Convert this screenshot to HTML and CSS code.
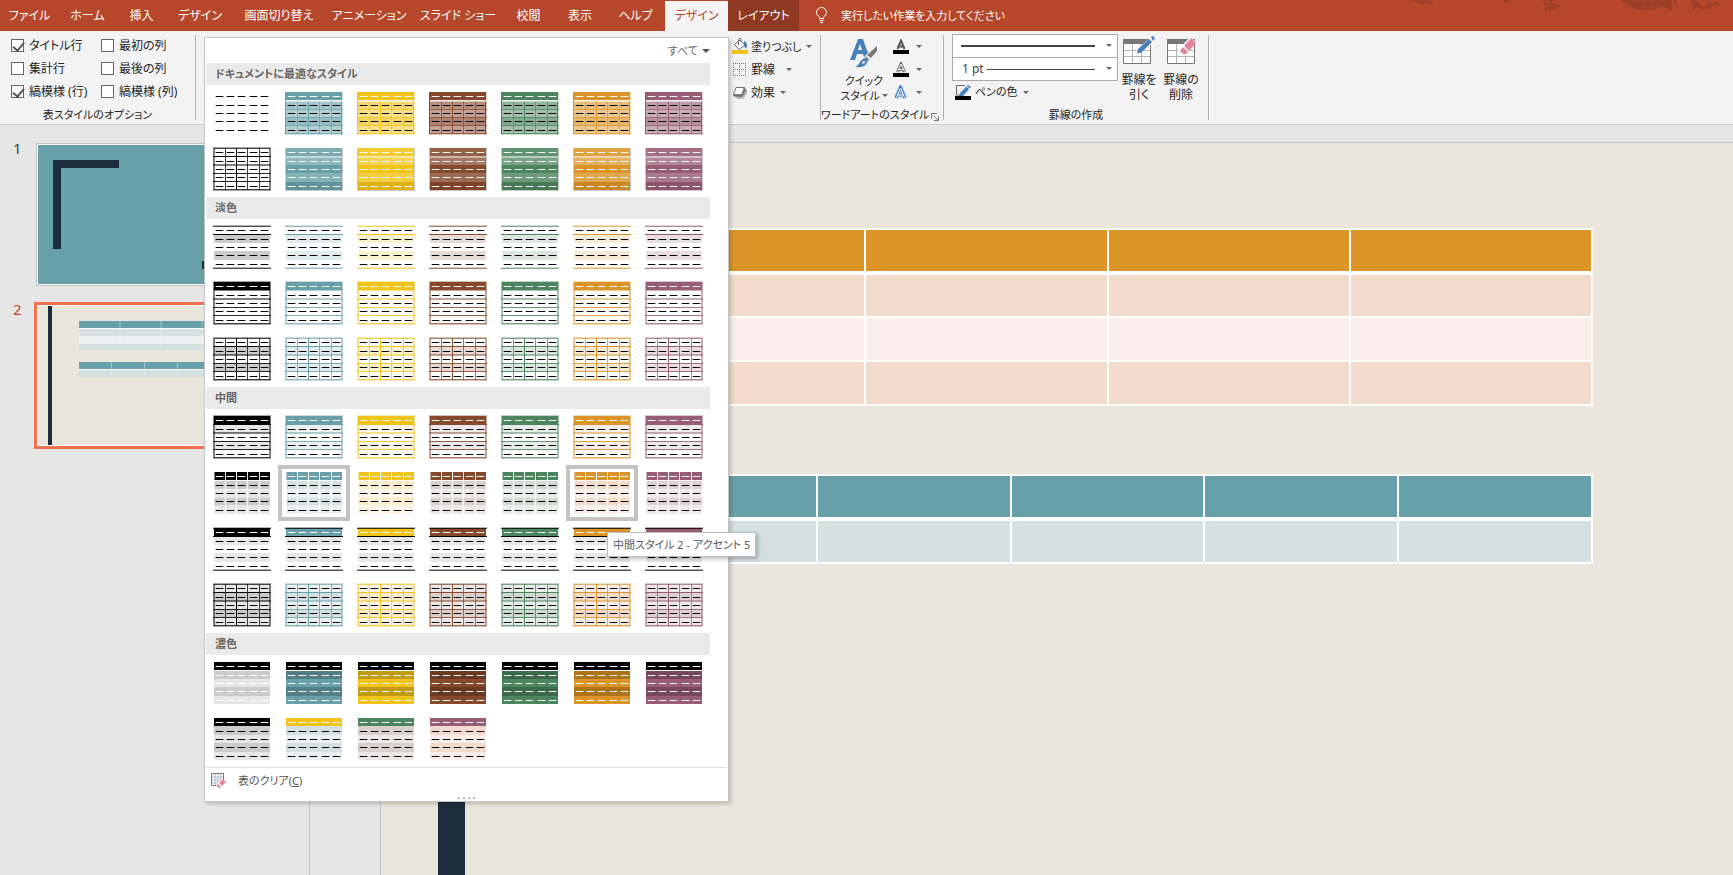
FILE: index.html
```html
<!DOCTYPE html>
<html lang="ja">
<head>
<meta charset="utf-8">
<title>表のデザイン</title>
<link rel="stylesheet" href="styles.css">
</head>
<body>
<header class="tabbar">
  <nav class="tabs">
    <button class="tab">ファイル</button>
    <button class="tab">ホーム</button>
    <button class="tab">挿入</button>
    <button class="tab">デザイン</button>
    <button class="tab">画面切り替え</button>
    <button class="tab">アニメーション</button>
    <button class="tab">スライド ショー</button>
    <button class="tab">校閲</button>
    <button class="tab">表示</button>
    <button class="tab">ヘルプ</button>
    <button class="tab tab-active">デザイン</button>
    <button class="tab tab-context">レイアウト</button>
  </nav>
  <button class="tellme">
    <svg width="13" height="17" viewBox="0 0 13 17" fill="none" stroke="#fff"><path d="M4.5 11.5V10C2.500 8.500 1.500 7.300 1.500 5.500a5 5 0 0 1 10 0c0 1.800-1 3-3 4.500v1.500zM4.500 13.500h4M5 15.500h3"/></svg>
    <span>実行したい作業を入力してください</span>
  </button>
  <svg class="sea" width="330" height="14" viewBox="0 0 330 14" aria-hidden="true">
    <g fill="#9c4029"><path d="M10 0h16l2 2 4-1-3 2 2 3-4-3-6 1-9-2z"/><circle cx="103" cy="0" r="3"/><path d="M140 0h14l-1 4 4 2v2l-4-2 2 5-3-3-1 4-2-4-2 4-1-4-3 4-1-3 2-3-3-1z"/><path d="M219 0h41l5-3 4 4v9c-3 2-6-2-8-4-8 5-33 7-42-6z"/><path d="M289 0l6 3 1 3-4 1-2 4M296 6c5 5 9 1 9-1l4 4M304 3l6 1 4-2 2 3" stroke="#9c4029" stroke-width="2"/><path d="M271 0h2v5h-2z"/></g>
    <g fill="#b7472a"><circle cx="144" cy="2" r="2"/><circle cx="151" cy="2" r="2"/><path d="M228 0h4l-2 2zM238 0h4l-2 2zM248 0h4l-2 2z"/></g>
  </svg>
</header>

<section class="ribbon">
  <div class="group group-options">
    <div class="checks">
      <label><input type="checkbox" checked>タイトル行</label>
      <label><input type="checkbox">最初の列</label>
      <label><input type="checkbox">集計行</label>
      <label><input type="checkbox">最後の列</label>
      <label><input type="checkbox" checked>縞模様 (行)</label>
      <label><input type="checkbox">縞模様 (列)</label>
    </div>
    <h2 class="group-name">表スタイルのオプション</h2>
  </div>

  <div class="group group-styles">
    <div class="effects">
      <button class="small">
        <svg width="16" height="17" viewBox="0 0 16 17"><path d="M0 12h16v4H0z" fill="#f2c31a"/><path d="M12 3c3 1 4 4 2 8l-2-3z" fill="#4a80ba"/><path d="M2.500 6.500L8 2l5 5-6 4.500z" fill="#fff" stroke="#666"/><path d="M6.500 7V1.500c0-1.500 2.500-1.500 2.500 0V4" fill="none" stroke="#666"/></svg>
        <span>塗りつぶし</span><i class="arrow"></i>
      </button>
      <button class="small">
        <svg width="16" height="16" viewBox="0 0 16 16" fill="none" stroke="#777" stroke-dasharray="1 1"><path d="M1 1.500h13M1 7.500h13M1 13.500h13M1.500 1v13M7.500 1v13M13.500 1v13"/></svg>
        <span>罫線</span><i class="arrow arrow-far"></i>
      </button>
      <button class="small">
        <svg width="16" height="16" viewBox="0 0 16 16"><path d="M3 12L6 14h5l4-5V4z" fill="#bbb"/><path d="M4 2.500h8.500L10 9.500H1.500z" fill="#fff" stroke="#777"/><path d="M12.500 2.500l1 3-3.500 6-8-.5-.5-1.500H10z" fill="#777" stroke="#777"/></svg>
        <span>効果</span><i class="arrow"></i>
      </button>
    </div>

    <div class="menu">
      <div class="menu-top"><button class="filter">すべて<i class="arrow arrow-big"></i></button></div>
      <div class="gallery" id="gallery"></div>
      <button class="clear">
        <svg width="16" height="16" viewBox="0 0 16 16"><path d="M1 1h12v12H1z" fill="#fff"/><path d="M4 1v12M7 1v12M10 1v12M1 4h12M1 7h12M1 10h12" stroke="#b5bac4"/><path d="M.5.5h12v12H.5z" fill="none" stroke="#777"/><path d="M5 12l6-6 5 3-6 6.500H7z" fill="#fff"/><path d="M8 10l4-4 3 3-4 4z" fill="#e2849a"/><path d="M7 11l3 3-1.500 1.500-3-3z" fill="#e2849a"/></svg>
        <span>表のクリア(<u>C</u>)</span>
      </button>
      <div class="grip"><i></i><i></i><i></i><i></i></div>
      <div class="tooltip" role="tooltip">中間スタイル 2 - アクセント 5</div>
    </div>
  </div>

  <div class="group group-wordart">
    <div class="wordart">
      <button class="big">
        <svg width="30" height="32" viewBox="0 0 30 32"><path d="M1 23L9 2h5l5 14-4 4-1-3H8l-2 6zM9 13h4l-2-6z" fill="#4a80ba" fill-rule="evenodd"/><path d="M28 9v5l-6 7-4-3z" fill="#777"/><path d="M16.500 19l4 3-1 2-4-3z" fill="#999"/><path d="M14 22c3-2 6 1 4 4-2 4-8 5-12 4 4-1 4-6 8-8z" fill="#4a80ba"/><path d="M13 25c2-2 4-1 3 1l-3 1z" fill="#dbe8f4"/></svg>
        <span>クイック</span><span class="with-arrow">スタイル<i class="arrow"></i></span>
      </button>
      <div class="text-tools">
        <button class="small" aria-label="文字の塗りつぶし"><svg width="16" height="16" viewBox="0 0 16 16"><path d="M4.500 10L8 1.500 11.500 10M6 7.500h4" fill="none" stroke="#555" stroke-width="2"/><path d="M0 11h16v4H0z"/></svg><i class="arrow"></i></button>
        <button class="small" aria-label="文字の輪郭"><svg width="16" height="16" viewBox="0 0 16 16"><path d="M4.500 10L8 2 11.500 10M6 7.500h4" fill="none" stroke="#666" stroke-width="3"/><path d="M4.500 9.500L8 2 11.500 9.500M6 7.500h4" fill="none" stroke="#fff"/><path d="M0 11h16v4H0z"/></svg><i class="arrow"></i></button>
        <button class="small" aria-label="文字の効果"><svg width="16" height="16" viewBox="0 0 16 16" fill="none"><path d="M3 13L7.500 3 12 13M5 10h5" stroke="#bcd5ee" stroke-width="5"/><path d="M3 13L7.500 2.500 12 13M5 10h5" stroke="#4a80ba" stroke-width="3"/><path d="M3.500 12.500L7.500 3 11.500 12.500M5 10h5" stroke="#fff"/></svg><i class="arrow"></i></button>
      </div>
    </div>
    <h2 class="group-name">ワードアートのスタイル
      <button class="launcher" aria-label="詳細"><svg width="8" height="8" viewBox="0 0 8 8" fill="none" stroke="#777"><path d="M.5 6V.5H6M3 3l4 4M7.500 3v4.500H3"/></svg></button>
    </h2>
  </div>

  <div class="group group-borders">
    <div class="borders">
      <div class="pen">
        <select class="combo combo-style" aria-label="ペンのスタイル"><option></option></select>
        <select class="combo combo-width" aria-label="ペンの太さ"><option>1 pt</option></select>
        <button class="small pen-color">
          <svg width="17" height="17" viewBox="0 0 17 17"><path d="M10 1.500H1.500V11M1.500 11H5" fill="none" stroke="#666"/><path d="M13 1l3 2-8 9-4 1 1-4z" fill="#4a80ba"/><path d="M12 3l3 2" stroke="#fff"/><path d="M0 12h16v4H0z"/></svg>
          <span>ペンの色</span><i class="arrow"></i>
        </button>
      </div>
      <button class="big">
        <svg width="32" height="30" viewBox="0 0 32 30"><path d="M.5 3.500h27v24H.5z" fill="#fff" stroke="#777"/><path d="M0 3h28v5H0z" fill="#777"/><path d="M1 14.500h26M1 20.500h26M9.500 8v19M18.500 8v19" stroke="#b4b4b4"/><path d="M12 19l2-6L27 2l4 4-13 11z" fill="#f3f3f3"/><path d="M14 17l1-4L26 3l3 3-11 11z" fill="#4a80ba"/><path d="M28 1l2-1 2 2-2 3z" fill="#4a80ba"/></svg>
        <span>罫線を</span><span>引く</span>
      </button>
      <button class="big">
        <svg width="32" height="30" viewBox="0 0 32 30"><path d="M2.500 3.500h27v24H2.500z" fill="#fff" stroke="#777"/><path d="M2 3h28v5H2z" fill="#777"/><path d="M3 14.500h26M3 20.500h26M11.500 8v19M20.500 8v19" stroke="#b4b4b4"/><path d="M13 14L25 1l6 5-11 14z" fill="#fff"/><path d="M19 10l7-8 5 5-7 8z" fill="#e2849a"/><path d="M18 11l5 5-2 2h-3l-3-3z" fill="#e2849a"/></svg>
        <span>罫線の</span><span>削除</span>
      </button>
    </div>
    <h2 class="group-name">罫線の作成</h2>
  </div>
</section>

<main class="workspace">
  <aside class="slides">
    <div class="slide-item">
      <span class="num">1</span>
      <button class="thumb" aria-label="スライド 1">
        <svg viewBox="0 0 247 139"><path d="M0 0h247v139H0z" fill="#68a0a9"/><path d="M15 15h66v8H23v81h-8zM164 116h66v-66h8v74h-74z" fill="#1b2d3e"/></svg>
      </button>
    </div>
    <div class="slide-item">
      <span class="num num-current">2</span>
      <button class="thumb thumb-current" aria-label="スライド 2">
        <svg viewBox="0 0 247 139"><path d="M0 0h247v139H0z" fill="#ebe6dc"/><path d="M10 0h4v139h-4z" fill="#1b2d3e"/><path d="M41 15h165v7H41zM41 56h165v7H41z" fill="#68a0a9"/><path d="M41 23h165v7H41zM41 38h165v6H41zM41 64h165v7H41z" fill="#d4e0e2"/><path d="M41 30h165v8H41z" fill="#ebf0f1"/><path d="M41 22.500h165M41 63.500h165" stroke="#fff"/><path d="M82 15v29M123 15v29M164 15v29M73.500 56v15M106.500 56v15M139.500 56v15M172.500 56v15" stroke="#fff" stroke-opacity=".4"/></svg>
      </button>
    </div>
  </aside>
  <section class="editor">
    <div class="slide">
      <div class="slide-bar"></div>
      <table class="grid grid-orange">
        <thead><tr><th></th><th></th><th></th><th></th></tr></thead>
        <tbody>
          <tr><td></td><td></td><td></td><td></td></tr>
          <tr><td></td><td></td><td></td><td></td></tr>
          <tr><td></td><td></td><td></td><td></td></tr>
        </tbody>
      </table>
      <table class="grid grid-teal">
        <thead><tr><th></th><th></th><th></th><th></th><th></th></tr></thead>
        <tbody><tr><td></td><td></td><td></td><td></td><td></td></tr></tbody>
      </table>
    </div>
  </section>
</main>
<script src="gallery.js"></script>
</body>
</html>
```

FILE: styles.css
```css
* { box-sizing: border-box; }

body {
  margin: 0;
  height: 100vh;
  display: flex;
  flex-direction: column;
  overflow: hidden;
  background: #e6e6e6;
  color: #262626;
  font: 12px/16px "Noto Sans", "Noto Sans CJK JP", sans-serif;
  font-feature-settings: "palt";
}

button, select, input { font: inherit; font-feature-settings: inherit; color: inherit; margin: 0; }
button { border: 0; padding: 0; background: none; white-space: nowrap; }
svg { display: block; flex: none; }

/* Tabs */
.tabbar { position: relative; display: flex; height: 31px; background: #b7472a; color: #fff; }
.tabs { display: grid; grid-template-columns: 59px 57px 51px 66px 92px 88px 90px 51px 52px 59px 63px 71px; }
.tab { text-align: center; }
.tab-active { background: #f3f3f3; color: #b7472a; border-top: 1px solid #b7472a; }
.tab-context { background: #8f3822; }
.tellme { display: flex; align-items: center; gap: 13px; padding-left: 16px; font-size: 11px; }
.sea { position: absolute; top: 0; right: 0; }

/* Ribbon */
.ribbon { display: flex; height: 94px; background: #f3f3f3; border-bottom: 1px solid #d0d0d0; padding: 4px 0; }
.group { display: flex; flex-direction: column; border-right: 1px solid #b1b1b1; position: relative; }
.group-name { margin: auto 0 -3px; font-size: 11px; font-weight: normal; line-height: 16px; text-align: center; white-space: nowrap; }
.group-options { width: 196px; }
.checks { display: grid; grid-template-columns: 90px 84px; grid-auto-rows: 23px; padding-left: 11px; margin-top: -1px; }
.checks label { display: flex; align-items: center; gap: 5px; white-space: nowrap; }
.checks input { appearance: none; position: relative; width: 13px; height: 13px; flex: none; border: 1px solid #666; background: #fff; }
.checks input:checked::after { content: ""; position: absolute; left: 3px; top: 0; width: 5px; height: 9px; border: solid #555; border-width: 0 2px 2px 0; transform: rotate(40deg); }

.group-styles { width: 625px; }
.effects { align-self: flex-end; width: 88px; display: grid; grid-auto-rows: 23px; }
.small { display: flex; align-items: center; gap: 3px; }
.effects .small:first-child { font-size: 11px; }
.arrow { width: 0; height: 0; flex: none; border: solid transparent; border-width: 3px 3px 0; border-top-color: #666; margin-left: 2px; }
.arrow-far { margin-left: 8px; }
.arrow-big { border-width: 4px 4px 0; border-top-color: #555; margin-left: 4px; }

.group-wordart { width: 123px; }
.wordart { display: flex; gap: 6px; padding-left: 20px; }
.big { display: flex; flex-direction: column; align-items: center; width: 42px; line-height: 15px; }
.wordart .big { width: 46px; padding-top: 2px; font-size: 11px; }
.wordart .big svg { margin-bottom: 4px; }
.with-arrow { display: flex; align-items: center; }
.text-tools { display: grid; grid-auto-rows: 23px; }
.text-tools .arrow { margin-left: 4px; }
.launcher { position: absolute; right: 4px; bottom: -1px; }
.group-wordart .group-name { padding-right: 16px; }

.group-borders { width: 265px; }
.borders { display: flex; padding-left: 8px; }
.pen { position: relative; width: 166px; margin-top: -1px; }
.combo { appearance: none; display: block; width: 100%; height: 24px; border: 1px solid #ababab; border-radius: 0; padding: 0 9px; color: #444; }
.combo-style { background: linear-gradient(#444, #444) 8px 10px / 134px 2px no-repeat, #fff; }
.combo-width { margin-top: -1px; background: linear-gradient(#444, #444) 34px 11px / 108px 1px no-repeat, #fff; }
.pen::before, .pen::after { content: ""; position: absolute; right: 6px; top: 10px; border: solid transparent; border-width: 3px 3px 0; border-top-color: #666; pointer-events: none; }
.pen::after { top: 33px; }
.pen-color { height: 22px; padding-left: 3px; font-size: 11px; }
.borders .big { padding-top: 1px; }
.borders .big svg { margin-bottom: 6px; }

/* Style gallery menu */
.menu { position: absolute; z-index: 2; left: 8px; top: 2px; width: 525px; background: #fff; border: 1px solid #c6c6c6; box-shadow: 2px 2px 4px rgba(0, 0, 0, .2); padding: 0 1px; color: #444; }
.menu-top { height: 25px; display: flex; justify-content: flex-end; padding-right: 17px; }
.filter { display: flex; align-items: center; color: #666; font-size: 11px; }
.gallery { padding-right: 17px; }
.gallery h3 { margin: 0; height: 22px; padding-left: 9px; background: #eaeaea; color: #666; font-size: 11px; line-height: 22px; }
.styles { display: grid; grid-template-columns: repeat(7, 72px); grid-auto-rows: 56px; }
.style { display: flex; align-items: center; justify-content: center; }
.style-selected { border: 4px solid #c3c3c3; }
.clear { display: flex; align-items: center; gap: 11px; width: 100%; height: 27px; border-top: 1px solid #e1e1e1; padding-left: 5px; color: #555; font-size: 11px; }
.grip { display: flex; justify-content: center; align-items: center; gap: 3px; height: 7px; }
.grip i { width: 2px; height: 2px; background: #b0b4be; }
.tooltip { position: absolute; left: 402px; top: 494px; padding: 3px 5px; line-height: 17px; font-size: 11px; white-space: nowrap; background: #fff; border: 1px solid #bebebe; box-shadow: 2px 2px 4px rgba(0, 0, 0, .25); color: #575757; }

/* Slide list and editor */
.workspace { flex: 1; min-height: 0; display: flex; }
.slides { width: 310px; flex: none; border-right: 1px solid #c0c0c0; padding-top: 18px; }
.slide-item { display: flex; align-items: flex-start; height: 161px; }
.num { width: 36px; padding-left: 13px; font-size: 15px; color: #444; line-height: 10px; }
.num-current { color: #c8452a; }
.thumb { width: 251px; border: 1px solid #c3c3c3; padding: 1px; background: #fff; }
.thumb-current { outline: 3px solid #f27250; outline-offset: -1px; border-color: #fff; }
.editor { flex: 1; min-width: 0; margin-left: 70px; padding-top: 17px; display: flex; }
.slide { position: relative; flex: 1; min-width: 0; border: solid #c3c3c3; border-width: 1px 0 0 1px; background: #ebe6dc; padding: 85px 140px 0 241px; }
.slide-bar { position: absolute; left: 57px; top: 0; bottom: 0; width: 27px; background: #1b2d3e; }
.grid { width: 100%; border-collapse: collapse; table-layout: fixed; }
.grid th, .grid td { border: 2px solid #fff; height: 44px; padding: 0; }
.grid th { border-bottom-width: 4px; }
.grid-orange th { background: #db9428; }
.grid-orange td { background: #f2dbcb; }
.grid-orange tr:nth-child(even) td { background: #f9eee9; }
.grid-teal { margin-top: 68px; }
.grid-teal th { background: #68a0a9; }
.grid-teal td { background: #d4e0e2; }
```

FILE: gallery.js
```js
// Accent palette: base colour, darker shade, strong tint, weak tint
const palette = [
  { base: "#000000", dark: "#cbcbcb", a: "#cbcbcb", b: "#e7e7e7" },
  { base: "#68a0a9", dark: "#537f87", a: "#d4e0e2", b: "#ebf0f1" },
  { base: "#f2c31a", dark: "#c29b12", a: "#faebcb", b: "#fdf5e7" },
  { base: "#87492b", dark: "#6b3820", a: "#d9cfcb", b: "#ede8e7" },
  { base: "#4b855d", dark: "#3b6a49", a: "#d0dad2", b: "#e9edea" },
  { base: "#db9428", dark: "#af7319", a: "#f2dbcb", b: "#f9eee9" },
  { base: "#985c75", dark: "#79475b", a: "#ddd1d5", b: "#efe9eb" }
];
const ys = [0, 9, 17, 25, 34, 42];

const rect = (x, y, w, h, fill, o = 1) =>
  `<rect x="${x}" y="${y}" width="${w}" height="${h}" fill="${fill}" fill-opacity="${o}"/>`;
const band = (i, fill, o) => rect(0, ys[i], 56, ys[i + 1] - ys[i], fill, o);
const bands = (a, b, o) => band(1, a, o) + band(2, b, o) + band(3, a, o) + band(4, b, o);
const hline = (y, c, o = 1) => rect(-1, y, 58, 1, c, o);
const softLine = (y, c) => hline(y, c, .5) + hline(y - 1, c, .5);
const vlines = (c, from, o = .75) => [11, 22, 33, 45].map(x => rect(x, from, 1, 42 - from, c, x === 22 ? 1 : o)).join("");
const frame = c => rect(-1, -1, 58, 1, c, .35) + rect(0, 0, 56, 1, c, .7) +
  rect(-1, 42, 58, 1, c, .35) + rect(0, 41, 56, 1, c, .75) +
  rect(-1, 0, 1, 42, c, .5) + rect(0, 0, 1, 42, c, .5) + rect(55, 0, 1, 42, c, .5) + rect(56, 0, 1, 42, c, .5);
const innerLines = c => softLine(17, c) + hline(25, c, .85) + hline(33, c, .85);
const dashes = (head, body) => [4, 13, 21, 29, 38].map((y, i) =>
  [2, 13, 24, 36, 47].map(x => rect(x - 1, y, 9, 1, i ? body : head, .3) + rect(x, y, 7, 1, i ? body : head)).join("")).join("");
const header = c => rect(0, 0, 56, 8, c);

const draw = {
  plain: () => dashes("#000", "#000"),
  themed: p => rect(-1, 0, 58, 43, p.base, .3) + header(p.base) + bands(p.base, p.base, .3) +
    band(1, p.base, .2) + band(3, p.base, .35) + vlines(p.base, 9, .7) +
    [17, 25, 33].map(y => hline(y, p.base, .7)).join("") + rect(-1, 0, 1, 42, p.base) + rect(55, 9, 1, 33, p.base) +
    hline(41, p.base, .7) + rect(0, 8, 56, 2, "#fff", .55) + dashes("#fff", "#000"),
  gridOnly: p => frame(p.base) + hline(8, p.base) + innerLines(p.base) + vlines(p.base, 0) + dashes("#000", "#000"),
  glossy: p => rect(-1, 0, 58, 43, "#888", .45) + rect(0, 0, 56, 42, p.base) + rect(0, 0, 56, 8, "#fff", .12) +
    rect(0, 8, 56, 2, "#fff", .6) + rect(0, 10, 56, 7, "#fff", .25) + rect(0, 25, 56, 9, "#fff", .18) +
    rect(0, 34, 56, 8, "#000", .08) + dashes("#fff", "#fff"),
  lightLines: p => band(1, p.base, .2) + band(3, p.base, .2) + hline(8, p.base) +
    hline(-1, p.base, .3) + hline(0, p.base, .7) + hline(42, p.base, .7) + hline(41, p.base, .3) + dashes("#000", "#000"),
  lightFrame: p => frame(p.base) + header(p.base) + rect(0, 8, 56, 1, p.base, .5) + innerLines(p.base) + dashes("#fff", "#000"),
  lightGrid: p => band(1, p.base, .2) + band(3, p.base, .2) + frame(p.base) + hline(8, p.base) + innerLines(p.base) + vlines(p.base, 0) + dashes("#000", "#000"),
  mediumFrame: p => band(1, p.b) + band(3, p.b) + frame(p.base) + header(p.base) + hline(8, p.base) + innerLines(p.base) + dashes("#fff", "#000"),
  mediumCells: p => header(p.base) + bands(p.a, p.b) + rect(0, 8, 56, 1, "#fff") + [17, 25, 33].map(y => hline(y, "#fff", .5)).join("") +
    vlines("#fff", 0, .9) + rect(0, 0, 1, 42, "#fff", .5) + dashes("#fff", "#000"),
  mediumLines: p => header(p.base) + band(1, "#e7e7e7") + band(3, "#e7e7e7") + hline(8, "#000") +
    hline(0, "#000", .75) + hline(-1, "#000", .3) + hline(42, "#000", .7) + hline(41, "#000", .3) + dashes("#fff", "#000"),
  mediumGrid: p => band(0, p.b) + bands(p.a, p.b) + frame(p.base) + hline(8, p.base) + innerLines(p.base) + vlines(p.base, 0) + dashes("#000", "#000"),
  dark: (p, i) => header("#000") + bands(p.dark, i ? p.base : p.b) + dashes("#fff", "#fff"),
  darkMixed: (p, i) => {
    const body = [0, 1, 3, 5][i];
    return header(palette[[0, 2, 4, 6][i]].base) + rect(0, 8, 56, 1, palette[body].a) +
      bands(palette[body].a, palette[body].b) + dashes("#fff", "#000");
  }
};

const sections = [
  ["ドキュメントに最適なスタイル", ["themed", "glossy"]],
  ["淡色", ["lightLines", "lightFrame", "lightGrid"]],
  ["中間", ["mediumFrame", "mediumCells", "mediumLines", "mediumGrid"]],
  ["濃色", ["dark", "darkMixed"]]
];

document.getElementById("gallery").innerHTML = sections.map(([title, rows]) => {
  const cells = rows.flatMap(kind => palette.slice(0, kind === "darkMixed" ? 4 : 7).map((p, i) => {
    let shape = kind;
    if (i === 0 && kind === "themed") shape = "plain";
    if (i === 0 && kind === "glossy") shape = "gridOnly";
    const selected = kind === "mediumCells" && (i === 1 || i === 5) ? " style-selected" : "";
    return `<button class="style${selected}"><svg width="58" height="44" viewBox="-1 -1 58 44" shape-rendering="crispEdges">${draw[shape](p, i)}</svg></button>`;
  })).join("");
  return `<h3>${title}</h3><div class="styles">${cells}</div>`;
}).join("");
```
